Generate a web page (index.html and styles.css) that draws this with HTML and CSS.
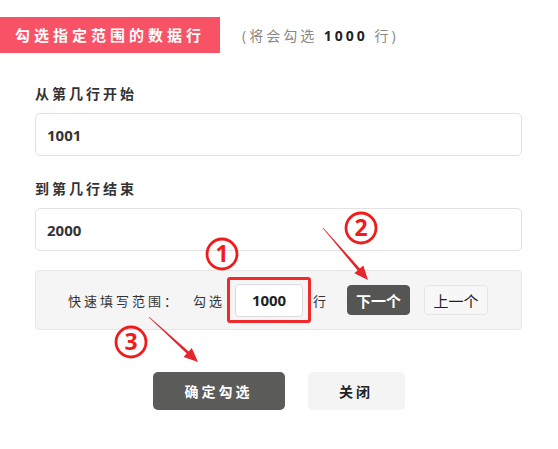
FILE: index.html
```html
<!DOCTYPE html>
<html lang="zh-CN">
<head>
  <meta charset="UTF-8">
  <meta name="viewport" content="width=device-width, initial-scale=1.0">
  <title>勾选指定范围的数据行</title>
  <link rel="stylesheet" href="styles.css">
</head>
<body>
  <div class="header">
    <div class="tab">勾选指定范围的数据行</div>
    <div class="tip">(将会勾选 <b>1000</b> 行)</div>
  </div>

  <div class="form">
    <div class="field">
      <label for="row-start">从第几行开始</label>
      <input type="text" id="row-start" value="1001">
    </div>
    <div class="field">
      <label for="row-end">到第几行结束</label>
      <input type="text" id="row-end" value="2000">
    </div>

    <div class="quick">
      <span class="quick-label">快速填写范围：</span>
      <span class="quick-pick">勾选</span>
      <span class="count-wrap">
        <input type="text" class="count" value="1000">
      </span>
      <span class="quick-unit">行</span>
      <button class="btn-small dark">下一个</button>
      <button class="btn-small">上一个</button>
    </div>

    <div class="actions">
      <button class="btn primary">确定勾选</button>
      <button class="btn">关闭</button>
    </div>
  </div>

  <!-- tutorial marks drawn over the dialog -->
  <svg class="marks" width="558" height="449" viewBox="0 0 558 449">
    <g fill="none" stroke="#f21b1b" stroke-width="2.8">
      <circle cx="222" cy="254" r="15"/>
      <circle cx="361" cy="228" r="15"/>
      <circle cx="131" cy="342" r="15"/>
    </g>
    <g fill="#f21b1b" font-family="'Open Sans', sans-serif" font-size="23" font-weight="700" text-anchor="middle">
      <text x="222" y="262">1</text>
      <text x="361" y="236">2</text>
      <text x="131" y="350">3</text>
    </g>
    <g fill="#e3262b">
      <polygon points="322.8,228.2 357.7,270.4 354.3,273.3 368,280 363.3,265.5 359.9,268.4 323.2,227.8"/>
      <polygon points="148.8,317.2 186.7,353.6 183.6,356.9 198,362 191.8,348.1 188.7,351.4 149.2,316.8"/>
    </g>
  </svg>
</body>
</html>
```

FILE: styles.css
```css
body {
  margin: 0;
  position: relative;
  font-family: "Open Sans", "Noto Sans CJK SC", sans-serif;
  color: #333;
  background: #fff;
}
.header {
  display: flex;
  align-items: center;
  padding-top: 17px;
}
.tab {
  width: 220px;
  height: 36px;
  line-height: 36px;
  background-color: #f75266;
  color: #fff;
  font-size: 15px;
  font-weight: bold;
  letter-spacing: 4px;
  text-align: center;
}
.tip {
  margin-left: 22px;
  font-size: 14px;
  color: #888;
  letter-spacing: 3px;
}
.tip b {
  color: #222;
}
.form {
  padding: 0 36px 0 35px;
  margin-top: 31px;
}
.field {
  margin-bottom: 23px;
}
.field label {
  display: block;
  line-height: 20px;
  margin-bottom: 9px;
  font-size: 14px;
  font-weight: bold;
  letter-spacing: 3px;
  color: #333;
}
.field input {
  display: block;
  width: 100%;
  height: 43px;
  box-sizing: border-box;
  padding: 0 11px;
  border: 1px solid #e2e2e2;
  border-radius: 5px;
  font-family: inherit;
  font-size: 15px;
  font-weight: bold;
  color: #333;
  outline: none;
}
.field:nth-child(2) {
  margin-bottom: 19px;
}
.quick {
  display: flex;
  align-items: center;
  height: 60px;
  box-sizing: border-box;
  padding-left: 32px;
  background-color: #f5f5f5;
  border: 1px solid #e6e6e6;
  border-radius: 4px;
  font-size: 13px;
  letter-spacing: 3px;
  color: #333;
}
.quick-label {
  margin-right: 13px;
}
.count-wrap {
  position: relative;
  margin-left: 10px;
}
.count-wrap::after {
  content: "";
  position: absolute;
  top: -7px;
  bottom: -6px;
  left: -8px;
  right: -8px;
  border: 3px solid #ef2b2b;
  border-radius: 3px;
  pointer-events: none;
}
.count {
  display: block;
  width: 68px;
  height: 33px;
  box-sizing: border-box;
  border: 1px solid #ddd;
  border-radius: 4px;
  background: #fff;
  text-align: center;
  font-family: inherit;
  font-size: 15px;
  font-weight: bold;
  color: #222;
  outline: none;
}
.quick-unit {
  margin-left: 10px;
  letter-spacing: 0;
}
.btn-small {
  height: 30px;
  width: 64px;
  margin-left: 21px;
  padding: 0;
  border: 1px solid #e6e6e6;
  border-radius: 4px;
  background-color: #f7f7f7;
  font-family: inherit;
  font-size: 15px;
  color: #222;
  cursor: pointer;
}
.btn-small + .btn-small {
  margin-left: 14px;
}
.btn-small.dark {
  width: 63px;
  background-color: #555553;
  border-color: #555553;
  color: #fff;
  font-weight: bold;
}
.actions {
  display: flex;
  justify-content: center;
  gap: 23px;
  margin-top: 42px;
}
.btn {
  width: 97px;
  height: 38px;
  border: none;
  border-radius: 5px;
  background-color: #f4f4f4;
  font-family: inherit;
  font-size: 14px;
  font-weight: bold;
  letter-spacing: 3px;
  color: #222;
  cursor: pointer;
}
.btn.primary {
  width: 132px;
  background-color: #5b5b59;
  color: #fff;
}
.marks {
  position: absolute;
  top: 0;
  left: 0;
  pointer-events: none;
}
```
